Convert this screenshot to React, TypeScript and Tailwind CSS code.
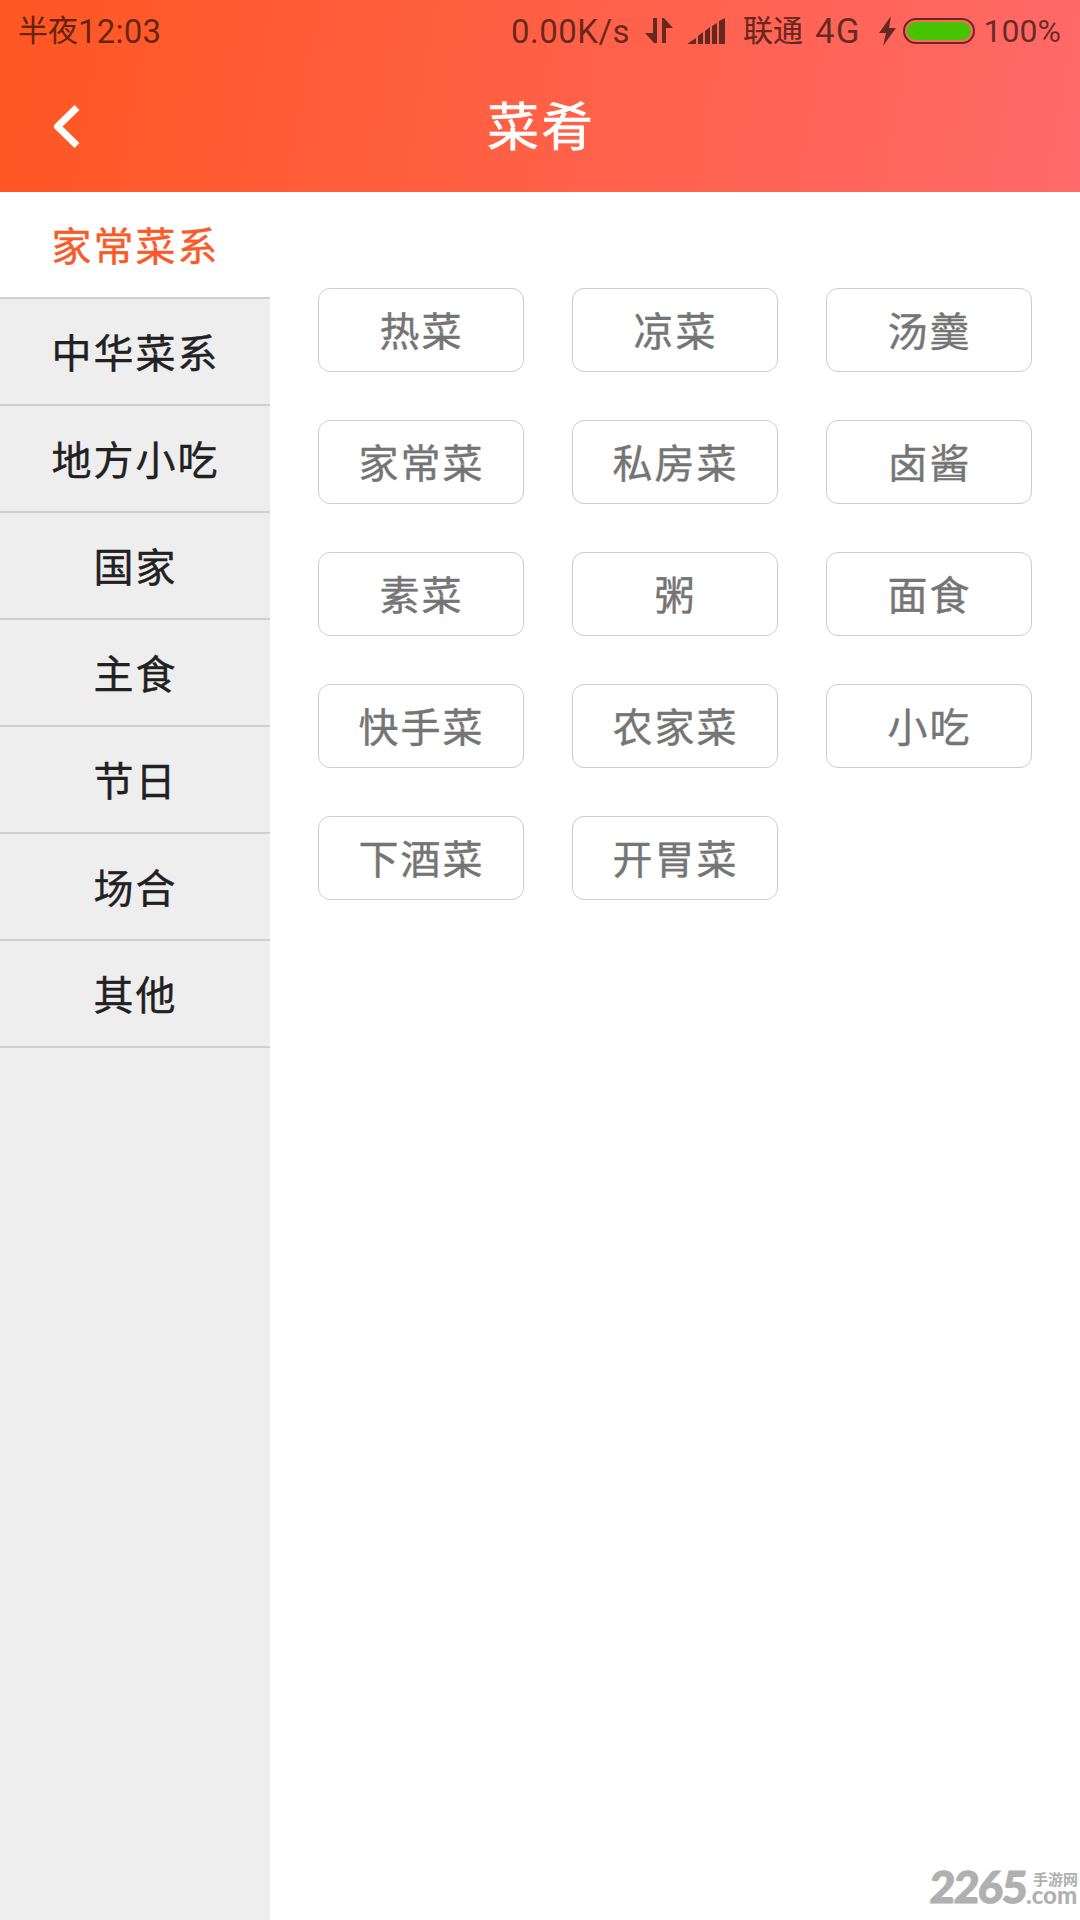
import clsx from "clsx";

const categories = [
  "家常菜系",
  "中华菜系",
  "地方小吃",
  "国家",
  "主食",
  "节日",
  "场合",
  "其他",
];

const dishes = [
  "热菜",
  "凉菜",
  "汤羹",
  "家常菜",
  "私房菜",
  "卤酱",
  "素菜",
  "粥",
  "面食",
  "快手菜",
  "农家菜",
  "小吃",
  "下酒菜",
  "开胃菜",
];

function StatusBar() {
  return (
    <div className="flex h-[62px] items-center whitespace-nowrap pl-[18px] pr-[19px] font-['Roboto','Noto_Sans_CJK_SC',sans-serif] leading-none text-black/60">
      <span className="flex items-center">
        <span className="text-[30px] [-webkit-text-stroke:0.2px]">半夜</span>
        <span className="text-[33px] tracking-[0.2px]">12:03</span>
      </span>
      <span className="ml-auto text-[33px] tracking-[0.5px]">0.00K/s</span>
      <svg className="ml-[15px] h-[28px] w-[28px]" viewBox="0 0 28 28" fill="currentColor">
        <path d="M8 1h4v25H9L0 16h8zM17 1h2l9 10h-7v15h-4z" />
      </svg>
      <svg className="ml-[14px] h-[26px] w-[38px]" viewBox="0 0 38 26" fill="currentColor">
        <path d="M0 26l9-6v6zM11 18l5-4v12h-5zM18 13l5-4v17h-5zM25 8l5-3v21h-5zM32 3l6-3v26h-6z" />
      </svg>
      <span className="ml-[18px] text-[30px] [-webkit-text-stroke:0.2px]">联通</span>
      <span className="ml-[12px] text-[35px] tracking-[1px]">4G</span>
      <svg className="ml-[18px] h-[30px] w-[18px]" viewBox="0 0 18 30" fill="currentColor">
        <path d="M12 0L0 17h7L4 30l13-18h-7z" />
      </svg>
      <span className="ml-[6px] flex h-[26px] w-[72px] rounded-full border-2 border-black/60 p-[2px]">
        <span className="flex-1 rounded-full bg-[#47c400]" />
      </span>
      <span className="ml-[9px] text-[32px]">100%</span>
    </div>
  );
}

function Header() {
  return (
    <header className="h-[192px] shrink-0 bg-linear-[100deg,#ff5722,#ff6969]">
      <StatusBar />
      <div className="grid h-[130px] grid-cols-[1fr_auto_1fr] items-center text-white">
        <svg className="ml-[53px] h-[46px] w-[28px]" viewBox="0 0 28 46" fill="none">
          <path
            d="M24 3.500L4.500 22.500L24 41.500"
            stroke="currentColor"
            strokeWidth="7"
            strokeLinejoin="round"
          />
        </svg>
        <h1 className="pb-[6px] pl-[2px] text-[52px] leading-none tracking-[2px] [-webkit-text-stroke:0.5px]">
          菜肴
        </h1>
      </div>
    </header>
  );
}

function Watermark() {
  return (
    <div className="absolute right-0 bottom-[13px] flex items-start leading-none text-[#b0b0b0]">
      <span className="w-[96px] -skew-x-3 font-['Lato','Liberation_Sans',sans-serif] text-[44px] leading-[42px] font-black tracking-[-1.5px] [-webkit-text-stroke:1px]">
        2265
      </span>
      <span className="flex w-[54px] flex-col pt-[5px]">
        <span className="pl-[7px] text-[15px] leading-[17px] font-bold">手游网</span>
        <span className="font-['Lato','Liberation_Sans',sans-serif] text-[24px] leading-[16px] font-black">
          .com
        </span>
      </span>
    </div>
  );
}

export default function App() {
  return (
    <div className="relative flex h-[1920px] w-[1080px] flex-col overflow-hidden bg-white font-['Noto_Sans_CJK_SC',sans-serif]">
      <Header />
      <main className="flex flex-1">
        <nav className="w-[270px] bg-[#eeeeee]">
          {categories.map((name, i) => (
            <div
              key={name}
              className={clsx(
                "flex h-[107px] items-center justify-center border-b-2 border-[#cfcfcf] pb-[2px] pl-px text-[40px] leading-none tracking-[2px] [-webkit-text-stroke:0.4px]",
                i === 0 ? "bg-white text-[#fa5a28]" : "text-[#212121]",
              )}
            >
              {name}
            </div>
          ))}
        </nav>
        <section className="grid flex-1 auto-rows-[84px] grid-cols-[repeat(3,206px)] content-start gap-12 px-12 pt-24">
          {dishes.map((dish) => (
            <button
              key={dish}
              className="flex items-center justify-center rounded-xl border border-[#cccccc] pb-[2px] pl-px text-[40px] leading-none tracking-[2px] text-[#757575] [-webkit-text-stroke:0.4px]"
            >
              {dish}
            </button>
          ))}
        </section>
      </main>
      <Watermark />
    </div>
  );
}
